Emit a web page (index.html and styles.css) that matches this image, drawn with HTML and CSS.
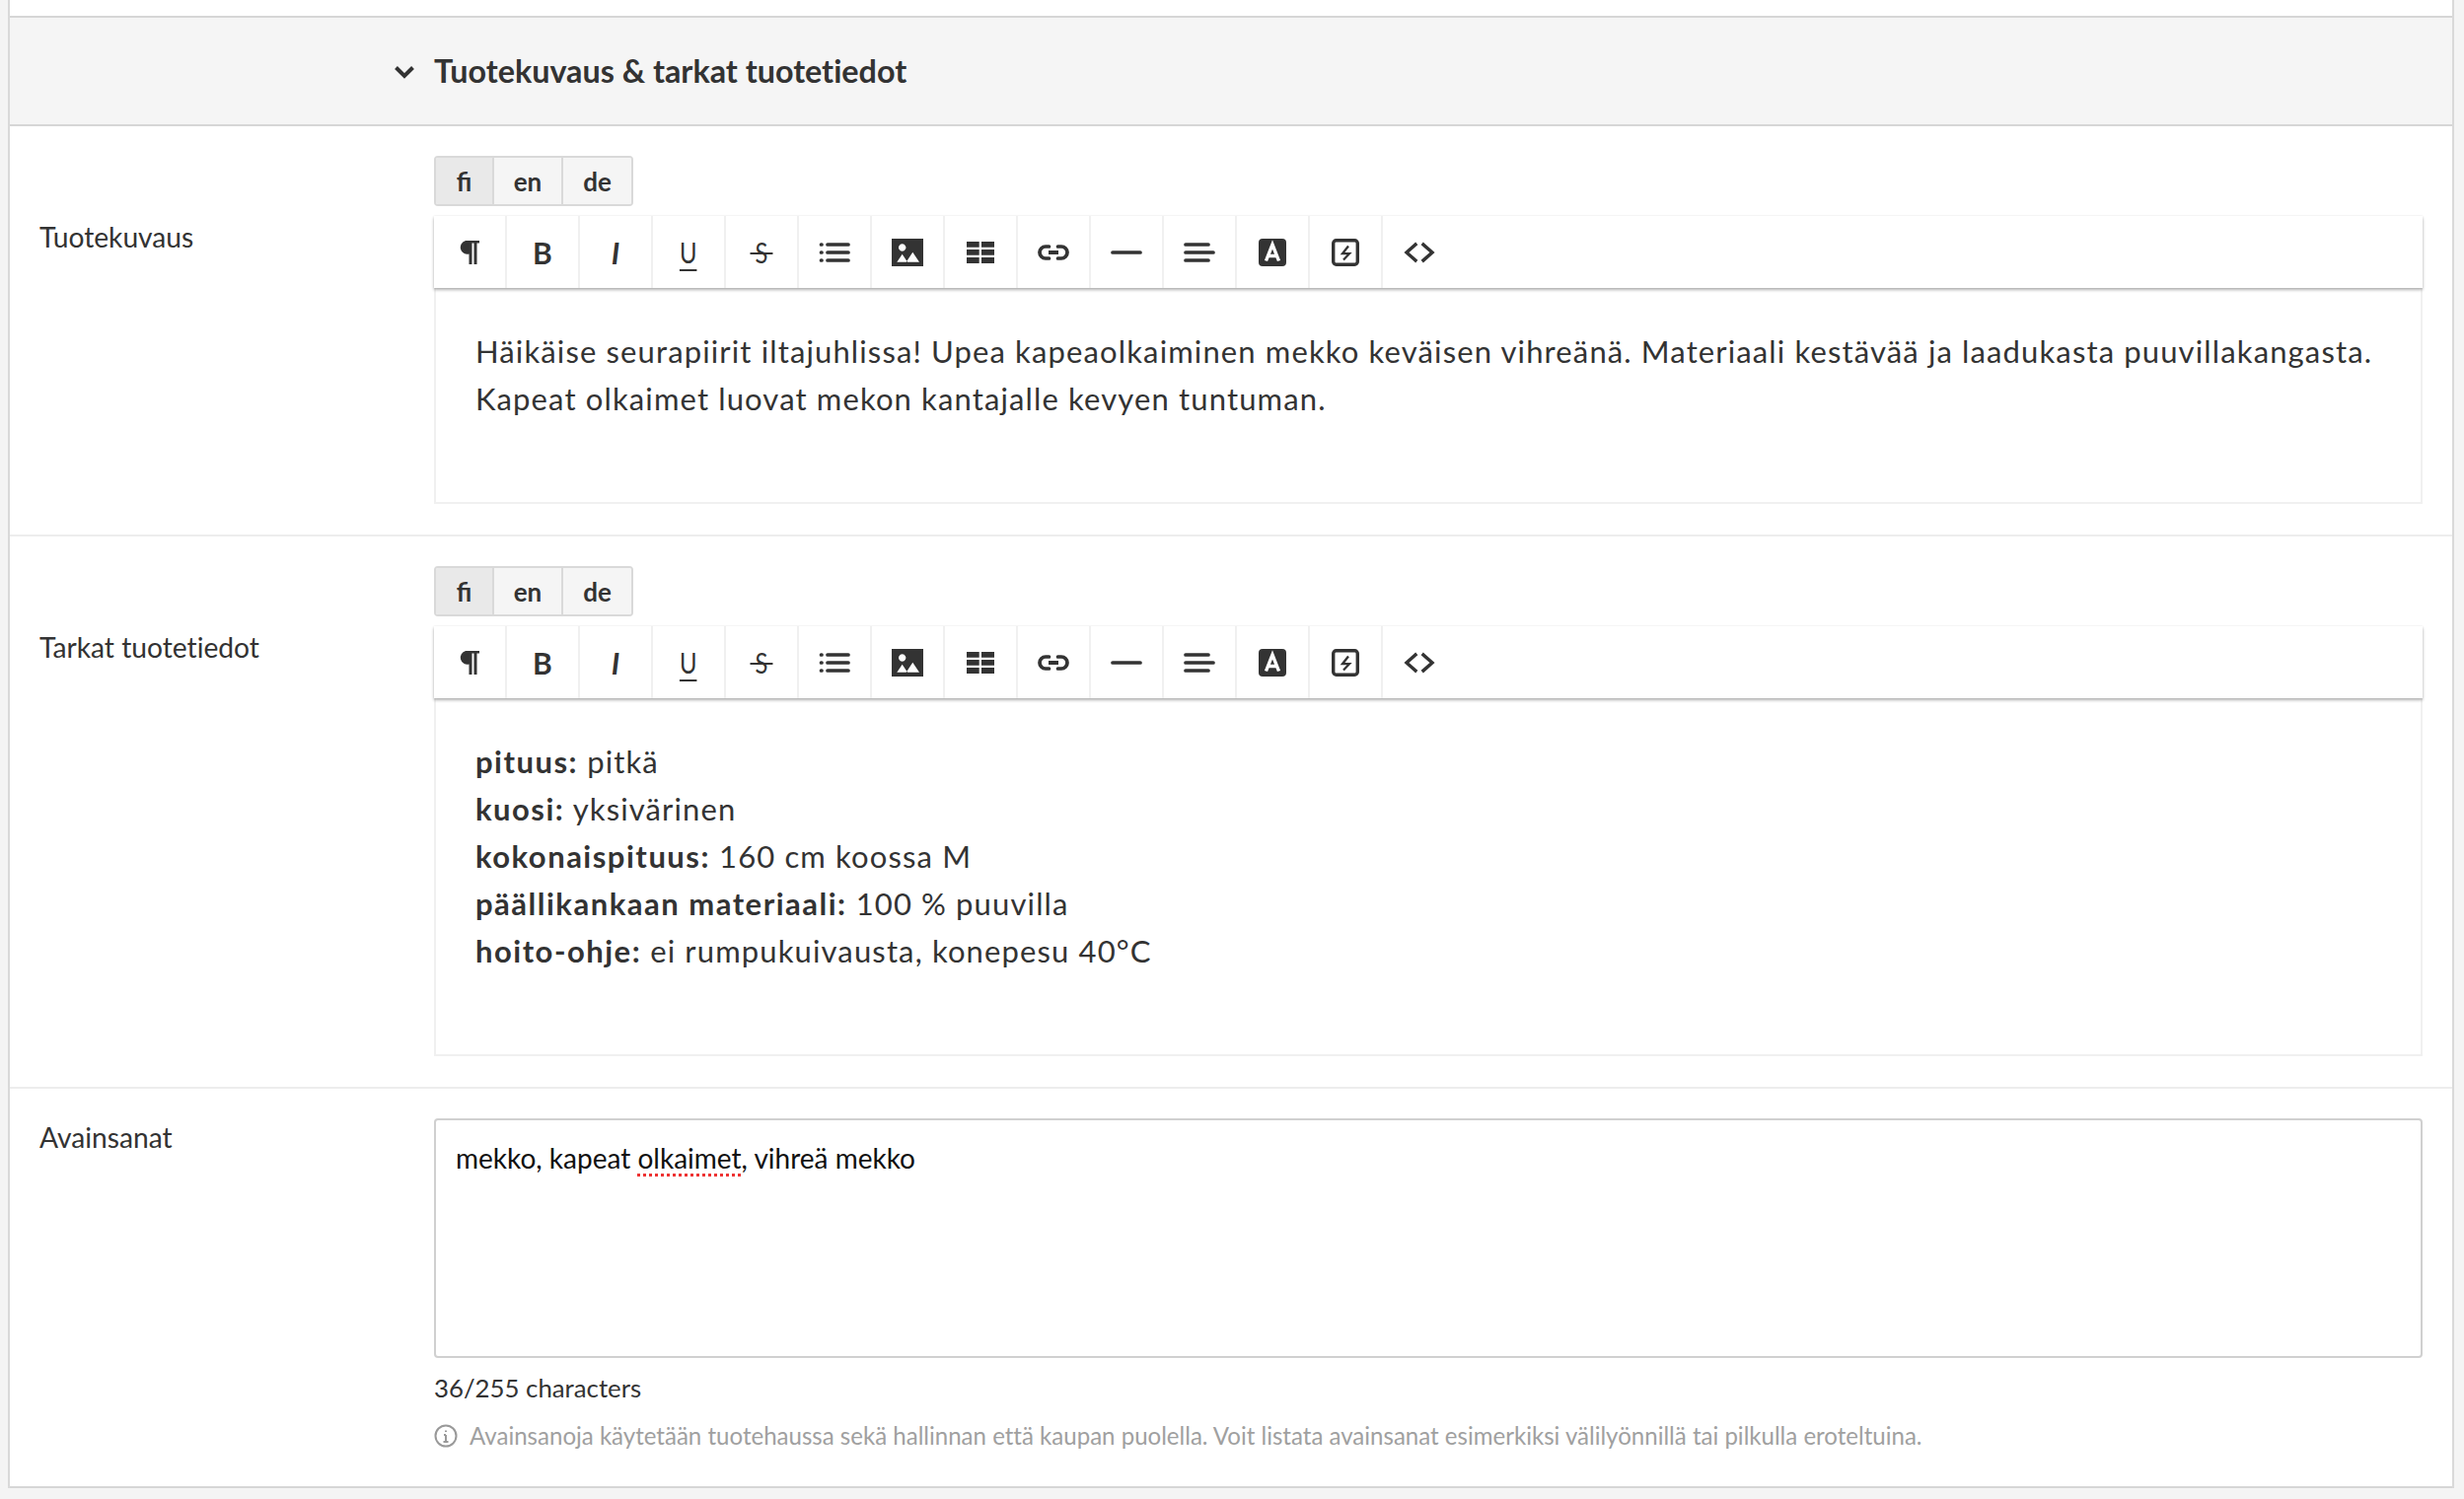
FILE: index.html
```html
<!DOCTYPE html>
<html lang="fi">
<head>
<meta charset="utf-8">
<title>Tuotekuvaus</title>
<link rel="stylesheet" href="styles.css">
</head>
<body>
<main class="panel">
  <div class="topstrip"></div>
  <header class="section-head">
    <svg class="chevron" viewBox="0 0 24 24"><path d="M3.500 8.500l8.500 8.500 8.500-8.500"/></svg>
    <h2>Tuotekuvaus &amp; tarkat tuotetiedot</h2>
  </header>

  <section class="row row-desc">
    <label class="row-label">Tuotekuvaus</label>
    <div class="row-body">
      <div class="langs"><span class="lang active">fi</span><span class="lang">en</span><span class="lang">de</span></div>
      <div class="toolbar">
        <span class="tool"><svg viewBox="0 0 32 32"><path class="f" d="M12 4h14v2.500h-2.500V28h-3V6.500h-2V28h-3V17.500a6.800 6.800 0 0 1-3.500-13.500z"/></svg></span>
        <span class="tool"><b class="glyph">B</b></span>
        <span class="tool"><i class="glyph slash">I</i></span>
        <span class="tool"><u class="glyph thin">U</u></span>
        <span class="tool"><span class="glyph thin strike">S</span></span>
        <span class="tool"><svg viewBox="0 0 32 32"><path class="s" d="M9 8h21M9 16h21M9 24h21M2.500 8h.5M2.500 16h.5M2.500 24h.5"/></svg></span>
        <span class="tool"><svg viewBox="0 0 32 32"><path class="f" fill-rule="evenodd" d="M0 2h32v28H0zM10.700 7.300a3.700 3.700 0 1 0 .01 0zM5.300 25.700H16l-5.300-8zM14.700 25.700H28l-6.700-10z"/></svg></span>
        <span class="tool"><svg viewBox="0 0 32 32"><path class="f" d="M2 5h12.700v5.700H2zM17 5h13v5.700H17zM2 13h12.700v5.700H2zM17 13h13v5.700H17zM2 21h12.700v6H2zM17 21h13v6H17z"/></svg></span>
        <span class="tool"><svg viewBox="0 0 32 32"><path class="s" d="M11.500 10H8a6 6 0 0 0 0 12h3.500M20.500 10H24a6 6 0 0 1 0 12h-3.500"/><path class="bar" d="M11 16h10"/></svg></span>
        <span class="tool"><svg viewBox="0 0 32 32"><path class="s" d="M2 16h28"/></svg></span>
        <span class="tool"><svg viewBox="0 0 32 32"><path class="s" d="M2 8h23M2 16h28M2 24h23"/></svg></span>
        <span class="tool"><svg viewBox="0 0 32 32"><rect class="f" x="2" y="2" width="28" height="28" rx="4"/><path class="w" d="M9.500 24.500L16 8l6.500 16.500M11.500 19.500h9"/></svg></span>
        <span class="tool"><svg viewBox="0 0 32 32"><rect class="o" x="3.700" y="3.700" width="24.600" height="24.600" rx="3"/><path class="t" d="M19 9.500L13 17.200h7L14 23.500"/></svg></span>
        <span class="tool last"><svg viewBox="0 0 32 32"><path class="s square" d="M12 8l-9 8 9 8M20 8l9 8-9 8"/></svg></span>
      </div>
      <div class="editor editor-desc">
        <p>Häikäise seurapiirit iltajuhlissa! Upea kapeaolkaiminen mekko keväisen vihreänä. Materiaali kestävää ja laadukasta puuvillakangasta. Kapeat olkaimet luovat mekon kantajalle kevyen tuntuman.</p>
      </div>
    </div>
  </section>

  <section class="row row-details">
    <label class="row-label">Tarkat tuotetiedot</label>
    <div class="row-body">
      <div class="langs"><span class="lang active">fi</span><span class="lang">en</span><span class="lang">de</span></div>
      <div class="toolbar">
        <span class="tool"><svg viewBox="0 0 32 32"><path class="f" d="M12 4h14v2.500h-2.500V28h-3V6.500h-2V28h-3V17.500a6.800 6.800 0 0 1-3.500-13.500z"/></svg></span>
        <span class="tool"><b class="glyph">B</b></span>
        <span class="tool"><i class="glyph slash">I</i></span>
        <span class="tool"><u class="glyph thin">U</u></span>
        <span class="tool"><span class="glyph thin strike">S</span></span>
        <span class="tool"><svg viewBox="0 0 32 32"><path class="s" d="M9 8h21M9 16h21M9 24h21M2.500 8h.5M2.500 16h.5M2.500 24h.5"/></svg></span>
        <span class="tool"><svg viewBox="0 0 32 32"><path class="f" fill-rule="evenodd" d="M0 2h32v28H0zM10.700 7.300a3.700 3.700 0 1 0 .01 0zM5.300 25.700H16l-5.300-8zM14.700 25.700H28l-6.700-10z"/></svg></span>
        <span class="tool"><svg viewBox="0 0 32 32"><path class="f" d="M2 5h12.700v5.700H2zM17 5h13v5.700H17zM2 13h12.700v5.700H2zM17 13h13v5.700H17zM2 21h12.700v6H2zM17 21h13v6H17z"/></svg></span>
        <span class="tool"><svg viewBox="0 0 32 32"><path class="s" d="M11.500 10H8a6 6 0 0 0 0 12h3.500M20.500 10H24a6 6 0 0 1 0 12h-3.500"/><path class="bar" d="M11 16h10"/></svg></span>
        <span class="tool"><svg viewBox="0 0 32 32"><path class="s" d="M2 16h28"/></svg></span>
        <span class="tool"><svg viewBox="0 0 32 32"><path class="s" d="M2 8h23M2 16h28M2 24h23"/></svg></span>
        <span class="tool"><svg viewBox="0 0 32 32"><rect class="f" x="2" y="2" width="28" height="28" rx="4"/><path class="w" d="M9.500 24.500L16 8l6.500 16.500M11.500 19.500h9"/></svg></span>
        <span class="tool"><svg viewBox="0 0 32 32"><rect class="o" x="3.700" y="3.700" width="24.600" height="24.600" rx="3"/><path class="t" d="M19 9.500L13 17.200h7L14 23.500"/></svg></span>
        <span class="tool last"><svg viewBox="0 0 32 32"><path class="s square" d="M12 8l-9 8 9 8M20 8l9 8-9 8"/></svg></span>
      </div>
      <div class="editor editor-details">
        <p><strong>pituus:</strong> pitkä<br>
        <strong>kuosi:</strong> yksivärinen<br>
        <strong>kokonaispituus:</strong> 160 cm koossa M<br>
        <strong>päällikankaan materiaali:</strong> 100 % puuvilla<br>
        <strong>hoito-ohje:</strong> ei rumpukuivausta, konepesu 40°C</p>
      </div>
    </div>
  </section>

  <section class="row row-keywords">
    <label class="row-label">Avainsanat</label>
    <div class="row-body">
      <div class="textarea">mekko, kapeat <span class="misspelt">olkaimet</span>, vihreä mekko</div>
      <div class="counter">36/255 characters</div>
      <div class="hint">
        <svg viewBox="0 0 24 24"><circle cx="12" cy="12" r="10.500"/><path d="M12 11v7M9.500 18h5M10 11h2M12 6.500v1.500"/></svg>
        <span>Avainsanoja käytetään tuotehaussa sekä hallinnan että kaupan puolella. Voit listata avainsanat esimerkiksi välilyönnillä tai pilkulla eroteltuina.</span>
      </div>
    </div>
  </section>
</main>
</body>
</html>
```
FILE: styles.css
```css
* { box-sizing: border-box; }
html, body { margin: 0; height: 100%; }
body {
  background: #f4f4f4;
  font-family: Lato, "Liberation Sans", sans-serif;
  font-variant-ligatures: none;
  color: #333;
  overflow: hidden;
}
.panel {
  margin: 0 10px 0 8px;
  background: #fff;
  border-left: 2px solid #d9d9d9;
  border-right: 2px solid #d9d9d9;
}
.topstrip { height: 16px; }
.section-head {
  height: 112px;
  background: #f5f5f5;
  border-top: 2px solid #d6d6d6;
  border-bottom: 2px solid #d6d6d6;
  display: grid;
  grid-template-columns: 388px 42px 1fr;
  align-items: center;
}
.section-head h2 {
  margin: 0 0 1px;
  font-size: 32.300px;
  font-weight: 700;
  color: #333;
}
.chevron {
  grid-column: 2;
  width: 24px;
  height: 24px;
  fill: none;
  stroke: #333;
  stroke-width: 4;
}
.row {
  display: grid;
  grid-template-columns: 400px 1fr;
  padding: 30px 30px 31px 30px;
  border-bottom: 2px solid #ededed;
}
.row-label {
  font-size: 28.200px;
  color: #333;
  line-height: 34px;
  padding-top: 65px;
}
.row-keywords .row-label { padding-top: 2px; }
.row-keywords { border-bottom-color: #d6d6d6; padding-bottom: 37px; }
.langs {
  display: inline-flex;
  height: 51px;
  border: 2px solid #d9d9d9;
  border-radius: 4px;
  vertical-align: top;
  overflow: hidden;
}
.lang {
  display: flex;
  align-items: center;
  justify-content: center;
  width: 70px;
  background: #f5f5f5;
  border-left: 2px solid #d9d9d9;
  font-size: 26px;
  font-weight: 700;
  color: #333;
}
.lang:last-child { width: 71px; }
.lang.active {
  border-left: 0;
  width: 57px;
  background: #e9e9e9;
  font-variant-ligatures: normal;
}
.toolbar {
  display: flex;
  height: 73px;
  margin-top: 10px;
  background: #fff;
  box-shadow: 0 2px 3px rgba(0,0,0,.3), 0 0 2px rgba(0,0,0,.08);
  position: relative;
}
.tool {
  width: 74px;
  display: flex;
  align-items: center;
  justify-content: center;
  border-right: 2px solid #f0f0f0;
  color: #333;
}
.tool.last { border-right: 0; }
.tool svg { width: 32px; height: 32px; overflow: visible; }
.tool svg .f { fill: #333; }
.tool svg .s { fill: none; stroke: #333; stroke-width: 3.700; stroke-linecap: round; stroke-linejoin: round; }
.tool svg .square { stroke-linecap: square; stroke-linejoin: miter; stroke-width: 3.400; }
.tool svg .bar { fill: none; stroke: #333; stroke-width: 4; }
.tool svg .w { fill: none; stroke: #fff; stroke-width: 3.400; }
.tool svg .o { fill: none; stroke: #333; stroke-width: 3.400; }
.tool svg .t { fill: none; stroke: #333; stroke-width: 2.300; }
.glyph { font-size: 30px; line-height: 1; color: #333; }
.glyph.thin {
  display: inline-block;
  font-weight: 400;
  font-size: 29px;
  transform: scaleX(.82);
  text-decoration-thickness: 2px;
  text-underline-offset: 6px;
}
.glyph.slash { font-weight: 700; }
.strike { position: relative; }
.strike::after {
  content: "";
  position: absolute;
  left: -6px;
  right: -6px;
  top: 50%;
  height: 2px;
  background: #333;
}
.editor {
  border: 2px solid #f0f0f0;
  border-top: 0;
  padding: 40px 30px 0 40px;
  font-family: Lato, sans-serif;
  font-size: 31px;
  letter-spacing: 1.130px;
  line-height: 48px;
  color: #333;
}
.editor strong { letter-spacing: 1.500px; }
.editor p { margin: 0; }
.editor-desc { height: 219px; }
.editor-details { height: 363px; }
.textarea {
  height: 243px;
  border: 2px solid #d0d0d0;
  border-radius: 4px;
  padding: 18px 20px;
  font-size: 28px;
  line-height: 40px;
  color: #111;
}
.misspelt {
  text-decoration: underline dotted #e33;
  text-decoration-thickness: 3px;
  text-underline-offset: 5px;
}
.counter { font-size: 25.800px; line-height: 34px; margin-top: 13px; color: #333; }
.hint {
  display: flex;
  align-items: center;
  gap: 12px;
  margin-top: 17px;
  font-size: 24.050px;
  color: #a0a0a0;
}
.hint svg {
  width: 24px;
  height: 24px;
  fill: none;
  stroke: #999;
  stroke-width: 2;
  flex: none;
}
```
